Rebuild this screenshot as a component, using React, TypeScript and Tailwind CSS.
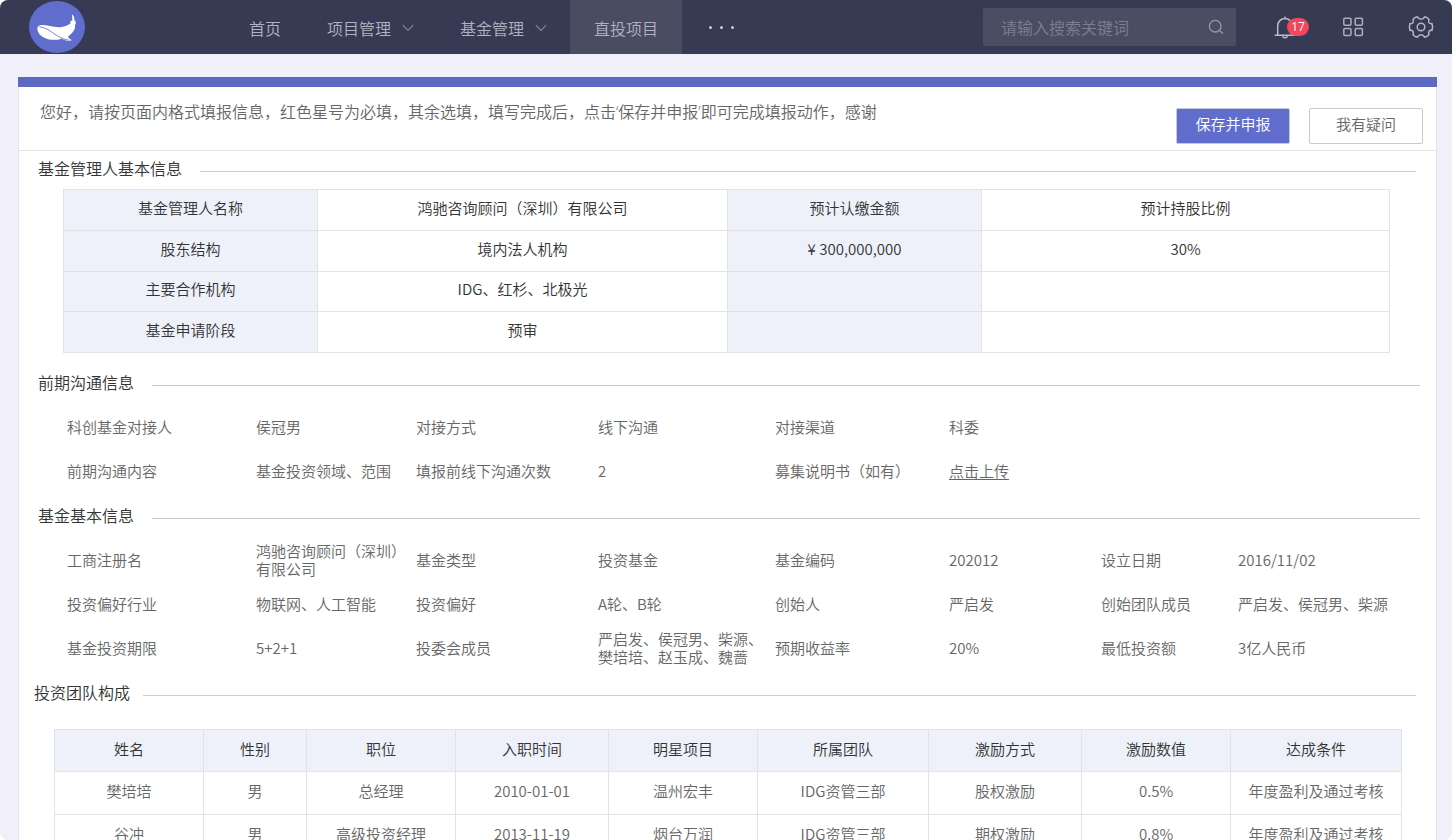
import type { ReactNode } from "react";

interface NavItem {
  label: string;
  hasMenu?: boolean;
  active?: boolean;
}

const NAV_ITEMS: NavItem[] = [
  { label: "首页" },
  { label: "项目管理", hasMenu: true },
  { label: "基金管理", hasMenu: true },
  { label: "直投项目", active: true },
];

const MANAGER_ROWS = [
  ["基金管理人名称", "鸿驰咨询顾问（深圳）有限公司", "预计认缴金额", "预计持股比例"],
  ["股东结构", "境内法人机构", "¥ 300,000,000", "30%"],
  ["主要合作机构", "IDG、红杉、北极光", "", ""],
  ["基金申请阶段", "预审", "", ""],
];

const CONTACT_ROWS: [string, string][][] = [
  [
    ["科创基金对接人", "侯冠男"],
    ["对接方式", "线下沟通"],
    ["对接渠道", "科委"],
  ],
  [
    ["前期沟通内容", "基金投资领域、范围"],
    ["填报前线下沟通次数", "2"],
    ["募集说明书（如有）", "点击上传"],
  ],
];

const FUND_ROWS: [string, string][][] = [
  [
    ["工商注册名", "鸿驰咨询顾问（深圳）有限公司"],
    ["基金类型", "投资基金"],
    ["基金编码", "202012"],
    ["设立日期", "2016/11/02"],
  ],
  [
    ["投资偏好行业", "物联网、人工智能"],
    ["投资偏好", "A轮、B轮"],
    ["创始人", "严启发"],
    ["创始团队成员", "严启发、侯冠男、柴源"],
  ],
  [
    ["基金投资期限", "5+2+1"],
    ["投委会成员", "严启发、侯冠男、柴源、樊培培、赵玉成、魏蔷"],
    ["预期收益率", "20%"],
    ["最低投资额", "3亿人民币"],
  ],
];

const TEAM_COLUMNS = [
  { label: "姓名", width: "w-[149px]" },
  { label: "性别", width: "w-[103px]" },
  { label: "职位", width: "w-[149px]" },
  { label: "入职时间", width: "w-[153px]" },
  { label: "明星项目", width: "w-[149px]" },
  { label: "所属团队", width: "w-[171px]" },
  { label: "激励方式", width: "w-[153px]" },
  { label: "激励数值", width: "w-[149px]" },
  { label: "达成条件", width: "w-[171px]" },
];

const TEAM_ROWS = [
  ["樊培培", "男", "总经理", "2010-01-01", "温州宏丰", "IDG资管三部", "股权激励", "0.5%", "年度盈利及通过考核"],
  ["谷冲", "男", "高级投资经理", "2013-11-19", "烟台万润", "IDG资管三部", "期权激励", "0.8%", "年度盈利及通过考核"],
];

function WhaleLogo() {
  return (
    <svg className="h-[52px] w-14 shrink-0" viewBox="0 0 168 156" preserveAspectRatio="none" aria-hidden>
      <ellipse cx="84" cy="78" rx="84" ry="78" fill="#606dcc" />
      <path
        fill="#fff"
        d="M25 85C24 77 29 72 39 72C56 72 78 81 98 78C112 76 121 71 125 67C121 64 124 61 130 57C131 51 128 46 129 40C134 45 137 50 136 57C141 60 142 66 138 73C140 82 134 94 119 105C115 108 119 112 129 118C118 121 107 118 98 113C84 118 61 118 47 111C34 105 26 96 25 85Z"
      />
      <path d="M31 78C52 78 70 96 88 106C98 112 108 116 119 117" fill="none" stroke="#606dcc" strokeWidth="2.5" />
    </svg>
  );
}

function ChevronIcon() {
  return (
    <svg className="h-3 w-3" viewBox="0 0 12 12" fill="none" stroke="#85889a" strokeWidth="1.1" aria-hidden>
      <path d="M.8 3.2 6 8.4l5.2-5.2" />
    </svg>
  );
}

function SearchIcon() {
  return (
    <svg className="h-4 w-4 shrink-0" viewBox="0 0 16 16" fill="none" stroke="#9699a7" strokeWidth="1.3" aria-hidden>
      <circle cx="7.2" cy="7.2" r="5.8" />
      <path d="m11.4 11.4 3.6 3.2" />
    </svg>
  );
}

function BellIcon() {
  return (
    <svg className="h-6 w-6" viewBox="0 0 24 24" fill="none" stroke="#b9bbc8" strokeWidth="1.5" aria-hidden>
      <path d="M3.7 20.2v-9.4a7.3 7.3 0 0 1 14.6 0v9.4M.6 20.2h20.8M11 3.4V1.6" />
      <path d="M8.5 21.2a2.6 2.1 0 0 0 5 0" />
    </svg>
  );
}

function AppsIcon() {
  return (
    <svg className="h-5 w-[22px]" viewBox="0 0 22 20" fill="none" stroke="#acaebc" strokeWidth="1.5" aria-hidden>
      <rect x="1.8" y="1.2" width="7.2" height="7" rx="1.2" />
      <rect x="13.2" y="1.2" width="7.2" height="7" rx="1.2" />
      <rect x="1.8" y="11.5" width="7.2" height="7" rx="1.2" />
      <rect x="13.2" y="11.5" width="7.2" height="7" rx="1.2" />
    </svg>
  );
}

function GearIcon() {
  return (
    <svg
      className="h-6 w-[26px]"
      viewBox="-13 -12 26 24"
      fill="none"
      stroke="#b4b6c4"
      strokeWidth="1.5"
      strokeLinejoin="round"
      aria-hidden
    >
      <path d="M11-3.4Q12.2 0 11 3.4C8 3 7 4.8 8 7.6Q6.4 9.8 3.6 10.2C2 7-2 7-3.6 10.2Q-6.4 9.8-8 7.6C-7 4.8-8 3-11 3.4Q-12.2 0-11-3.4C-8-3-7-4.8-8-7.6Q-6.4-9.8-3.6-10.2C-2-7 2-7 3.6-10.2Q6.4-9.8 8-7.6C7-4.8 8-3 11-3.4Z" />
      <circle r="3.8" />
    </svg>
  );
}

function TopBar() {
  return (
    <header className="flex h-[54px] shrink-0 items-center bg-[#373a53] pr-[18px] pl-[29px]">
      <WhaleLogo />
      <nav className="ml-[141px] flex h-full">
        {NAV_ITEMS.map((item) => (
          <button
            key={item.label}
            type="button"
            className={`flex h-full items-center gap-[11px] pt-px text-base whitespace-nowrap text-[#b1b3c1] ${
              item.active ? "bg-[#4a4d62] px-6" : "px-[23px]"
            }`}
          >
            {item.label}
            {item.hasMenu && <ChevronIcon />}
          </button>
        ))}
        <button type="button" aria-label="更多" className="flex items-center gap-2 px-[27px]">
          <span className="h-[3px] w-[3px] rounded-full bg-[#c9cbd5]" />
          <span className="h-[3px] w-[3px] rounded-full bg-[#c9cbd5]" />
          <span className="h-[3px] w-[3px] rounded-full bg-[#c9cbd5]" />
        </button>
      </nav>
      <label className="mr-[38px] ml-auto flex h-[38px] w-[253px] items-center rounded-xs bg-[#4b4e62] pr-3 pl-[18px]">
        <input
          type="text"
          aria-label="搜索"
          placeholder="请输入搜索关键词"
          className="min-w-0 flex-1 bg-transparent text-base text-[#b1b3c1] outline-none placeholder:text-[#7d8090]"
        />
        <SearchIcon />
      </label>
      <button type="button" aria-label="通知" className="relative">
        <BellIcon />
        <span className="absolute top-[3px] left-[13px] flex h-[18px] w-[22px] items-center justify-center rounded-full bg-[#f5455c] pb-px font-['Open_Sans',sans-serif] text-xs font-normal text-white">
          17
        </span>
      </button>
      <button type="button" aria-label="应用" className="ml-11">
        <AppsIcon />
      </button>
      <button type="button" aria-label="设置" className="ml-11">
        <GearIcon />
      </button>
    </header>
  );
}

function SectionTitle({ children, className = "gap-[18px] pr-4 pl-[19px]" }: { children: ReactNode; className?: string }) {
  return (
    <div className={`flex items-end ${className}`}>
      <h2 className="text-base leading-6 text-[#333]">{children}</h2>
      <span className="mb-2 h-px flex-1 bg-[#ccc]" />
    </div>
  );
}

function InfoGrid({ rows }: { rows: [string, string][][] }) {
  return (
    <div className="mt-3 mb-[9px] pr-5 pl-12 text-[15px] leading-[18px] text-[#666]">
      {rows.map((row) => (
        <dl
          key={row[0][0]}
          className="grid h-11 grid-cols-[189fr_160fr_182fr_177fr_174fr_152fr_137fr_178fr] items-center pb-0.5"
        >
          {row.map(([label, value]) => (
            <div key={label} className="contents">
              <dt>{label}</dt>
              <dd>
                {value === "点击上传" ? (
                  <a href="#upload" className="underline underline-offset-2">
                    {value}
                  </a>
                ) : (
                  value
                )}
              </dd>
            </div>
          ))}
        </dl>
      ))}
    </div>
  );
}

function ManagerTable() {
  return (
    <div className="mt-[9px] mb-[17px] pr-[46px] pl-11">
      <table className="h-[164px] w-full table-fixed border-collapse text-center text-[15px] leading-5 text-[#333]">
        <colgroup>
          <col className="w-[254px]" />
          <col className="w-[410px]" />
          <col className="w-[254px]" />
          <col className="w-[408px]" />
        </colgroup>
        <tbody>
          {MANAGER_ROWS.map(([name, value, extra, share]) => (
            <tr key={name}>
              <th scope="row" className="border border-[#e3e3e3] bg-[#eef1fa] pb-1 font-[350]">
                {name}
              </th>
              <td className="border border-[#e3e3e3] pb-1">{value}</td>
              <td className="border border-[#e3e3e3] bg-[#eef1fa] pb-1">{extra}</td>
              <td className="border border-[#e3e3e3] pb-1">{share}</td>
            </tr>
          ))}
        </tbody>
      </table>
    </div>
  );
}

function TeamTable() {
  return (
    <div className="mt-[25px] px-[35px] pb-10">
      <table className="w-full table-fixed border-collapse text-center text-[15px] leading-5 text-[#666]">
        <thead>
          <tr className="h-[42px] bg-[#eef1fa] text-[#333]">
            {TEAM_COLUMNS.map((column) => (
              <th
                key={column.label}
                scope="col"
                className={`border border-[#e3e3e3] pb-1 font-[350] ${column.width}`}
              >
                {column.label}
              </th>
            ))}
          </tr>
        </thead>
        <tbody>
          {TEAM_ROWS.map((row) => (
            <tr key={row[0]} className="h-[43px]">
              {row.map((cell, i) => (
                <td key={TEAM_COLUMNS[i].label} className="border border-[#e3e3e3] pb-1">
                  {cell}
                </td>
              ))}
            </tr>
          ))}
        </tbody>
      </table>
    </div>
  );
}

export default function App() {
  return (
    <div className="h-screen bg-white font-['Noto_Sans_CJK_SC',sans-serif] font-[350]">
      <div className="flex h-full flex-col overflow-hidden rounded-lg bg-[#f1effa]">
        <TopBar />
        <main className="min-h-0 flex-1 overflow-hidden pt-[23px] pr-[15px] pl-[18px]">
          <div className="h-2.5 bg-[#5c68c2]" />
          <div className="border-x border-[#e5e5e5] bg-white">
            <div className="flex h-16 justify-between border-b border-[#e3e3e3] pr-[13px] pl-[21px]">
              {/* Latin font first so the quotes stay narrow */}
              <p className="pt-[13px] font-['Open_Sans','Noto_Sans_CJK_SC',sans-serif] text-base leading-6 text-[#666]">
                您好，请按页面内格式填报信息，红色星号为必填，其余选填，填写完成后，点击‘保存并申报’即可完成填报动作，感谢
              </p>
              <div className="flex shrink-0 gap-[19px] pt-[21px] text-[15px]">
                <button
                  type="button"
                  className="h-9 w-[114px] rounded-xs border border-[#c5c8dc] bg-[#606dcc] pb-1 text-white"
                >
                  保存并申报
                </button>
                <button
                  type="button"
                  className="h-9 w-[114px] rounded-xs border border-[#c9c9c9] bg-white pb-1 text-[#666]"
                >
                  我有疑问
                </button>
              </div>
            </div>

            <section className="pt-[5px]">
              <SectionTitle className="gap-[18px] pr-5 pl-[19px]">基金管理人基本信息</SectionTitle>
              <ManagerTable />
            </section>
            <section>
              <SectionTitle>前期沟通信息</SectionTitle>
              <InfoGrid rows={CONTACT_ROWS} />
            </section>
            <section>
              <SectionTitle>基金基本信息</SectionTitle>
              <InfoGrid rows={FUND_ROWS} />
            </section>
            <section>
              <SectionTitle className="gap-[13px] pr-5 pl-[15px]">投资团队构成</SectionTitle>
              <TeamTable />
            </section>
          </div>
        </main>
      </div>
    </div>
  );
}
